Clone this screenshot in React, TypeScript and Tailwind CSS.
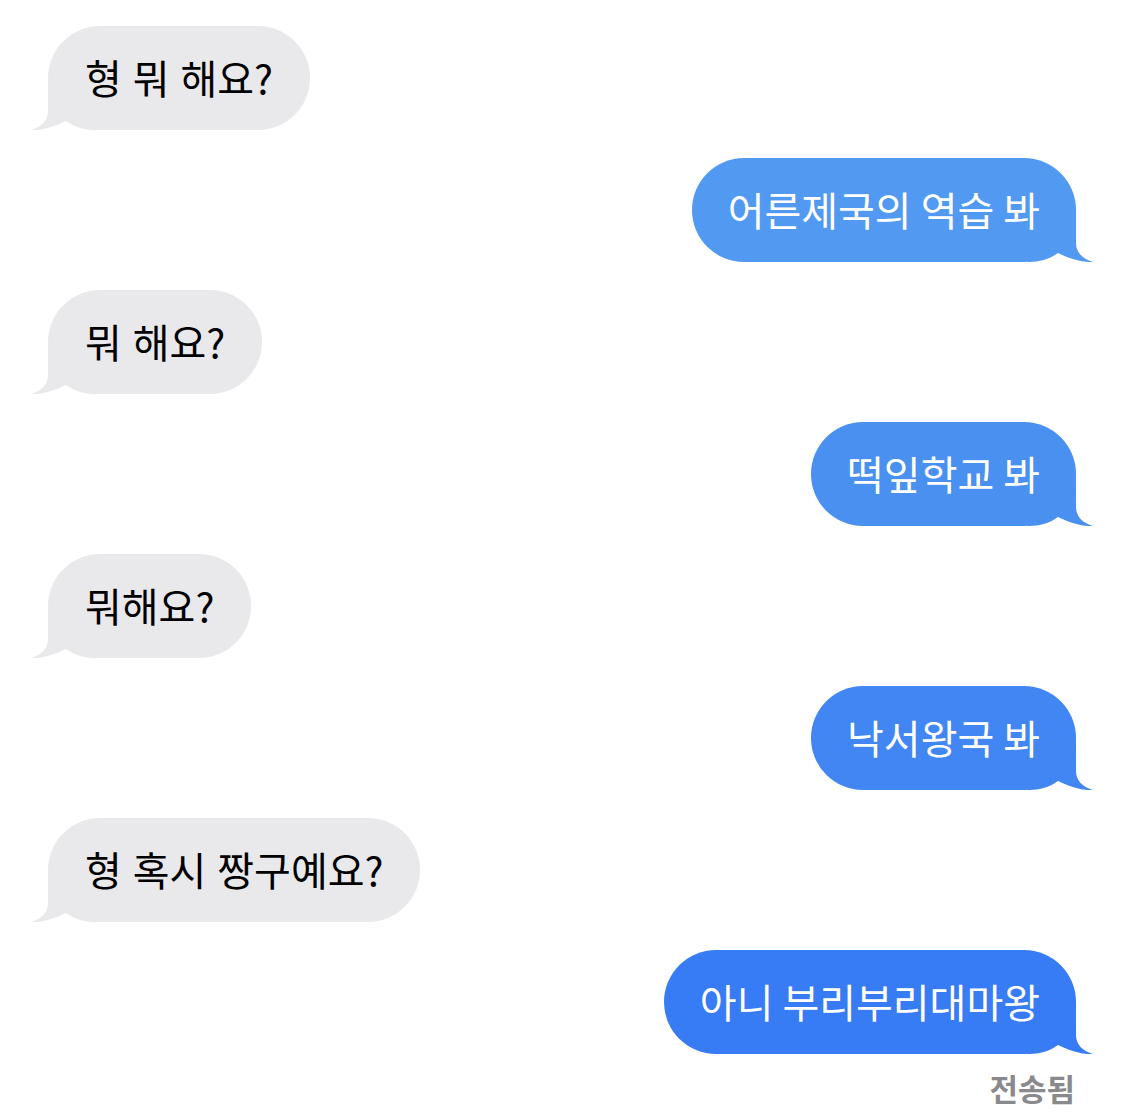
import React from "react";

const font = { fontFamily: '"Noto Sans CJK KR", "Noto Sans", sans-serif' };

function Tail({ side, color }: { side: "left" | "right"; color: string }) {
  const pos = side === "left" ? "left-[-17px]" : "right-[-17px] -scale-x-100";
  return (
    <svg
      className={`absolute bottom-0 ${pos}`}
      width="65"
      height="52"
      viewBox="0 0 65 52"
    >
      <path
        d="M17,0 L17,33 C17,43 10,49 0,52 C11,52.5 23,49 35,43 C43,49 53,52 65,52 L65,0 Z"
        fill={color}
      />
    </svg>
  );
}

function Received({ text }: { text: string }) {
  return (
    <div className="flex justify-start">
      <div className="relative">
        <Tail side="left" color="#E9E9EB" />
        <div className="relative h-[104px] rounded-[52px] bg-[#E9E9EB] px-[37px] pb-[2px] flex items-center text-[40px] [word-spacing:2px] text-black whitespace-nowrap">
          {text}
        </div>
      </div>
    </div>
  );
}

function Sent({ text, color, bg }: { text: string; color: string; bg: string }) {
  return (
    <div className="flex justify-end">
      <div className="relative">
        <Tail side="right" color={color} />
        <div
          className={`relative h-[104px] rounded-[52px] px-[36px] pb-[2px] flex items-center text-[40px] text-white whitespace-nowrap ${bg}`}
        >
          {text}
        </div>
      </div>
    </div>
  );
}

export default function App() {
  return (
    <div className="w-[1125px] h-[1117px] bg-white overflow-hidden" style={font}>
      <div className="flex flex-col gap-[28px] pt-[26px] pl-[48px] pr-[49px]">
        <Received text="형 뭐 해요?" />
        <Sent text="어른제국의 역습 봐" color="#529AF1" bg="bg-[#529AF1]" />
        <Received text="뭐 해요?" />
        <Sent text="떡잎학교 봐" color="#4A90F1" bg="bg-[#4A90F1]" />
        <Received text="뭐해요?" />
        <Sent text="낙서왕국 봐" color="#4186F3" bg="bg-[#4186F3]" />
        <Received text="형 혹시 짱구예요?" />
        <Sent text="아니 부리부리대마왕" color="#377BF5" bg="bg-[#377BF5]" />
      </div>
      <div className="flex justify-end pr-[50px] pt-[18px]">
        <span className="text-[31px] font-semibold text-[#8A8A8E] leading-none">전송됨</span>
      </div>
    </div>
  );
}
